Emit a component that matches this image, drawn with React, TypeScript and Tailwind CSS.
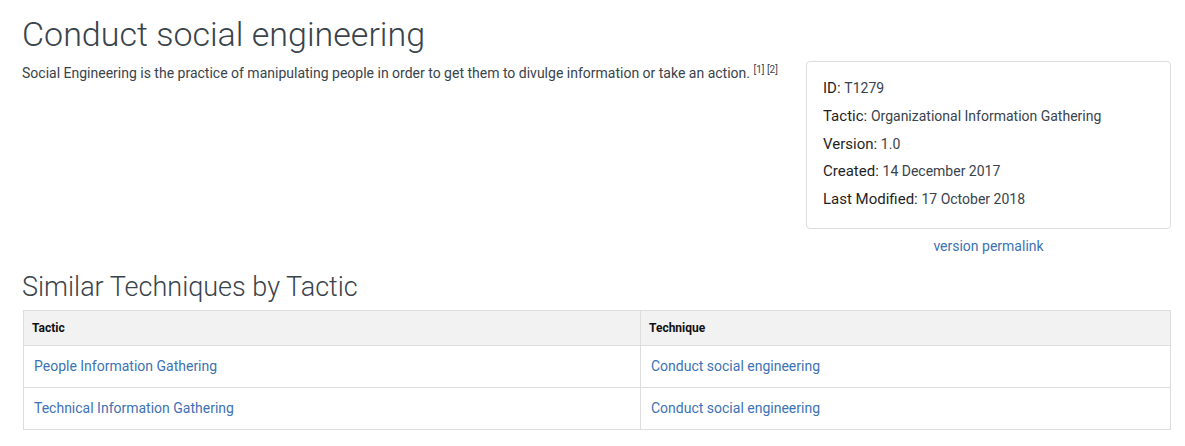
const rows = [
  { tactic: "People Information Gathering", technique: "Conduct social engineering" },
  { tactic: "Technical Information Gathering", technique: "Conduct social engineering" },
];

const meta = [
  { label: "ID", value: "T1279" },
  { label: "Tactic", value: "Organizational Information Gathering" },
  { label: "Version", value: "1.0" },
  { label: "Created", value: "14 December 2017" },
  { label: "Last Modified", value: "17 October 2018" },
];

export default function App() {
  return (
    <div className="min-h-[446px] bg-white pl-[22px] pr-[14px] pt-[12px] font-['Roboto',sans-serif] text-[#39434c]">
      <h1 className="text-[34px] font-light leading-[44px] text-[#39434c]">Conduct social engineering</h1>

      <div className="flex items-start justify-between">
        {/* Description */}
        <p className="mt-[7px] text-[14px] leading-[20px] text-[#39434c]">
          Social Engineering is the practice of manipulating people in order to get them to divulge information or take an action.{" "}
          <sup className="text-[10px]">
            <a className="text-[#39434c]">[1]</a> <a className="text-[#39434c]">[2]</a>
          </sup>
        </p>

        {/* Info card */}
        <div className="mt-[5px] w-[365px] shrink-0">
          <div className="rounded-[4px] border border-[#dddddd] px-[16px] pt-[13px] pb-[14px]">
            {meta.map((m) => (
              <div key={m.label} className="h-[27.75px] text-[14px] leading-[27.75px] text-[#39434c]">
                <span className="text-[15px] leading-[20px] text-[#1f1f1f]">{m.label}: </span>
                {m.value}
              </div>
            ))}
          </div>
          <div className="mt-[7px] text-center text-[14px] leading-[20px]">
            <a className="text-[#3d72b4]">version permalink</a>
          </div>
        </div>
      </div>

      <h2 className="mt-[13px] text-[27px] font-light leading-[36px] text-[#39434c]">Similar Techniques by Tactic</h2>

      {/* Table */}
      <table className="mt-[5px] ml-[1px] w-[1148px] border-collapse text-[14px]">
        <thead>
          <tr className="bg-[#f2f2f2]">
            <th className="h-[35px] w-[617px] border border-[#dddddd] px-[8px] text-left text-[12px] font-bold text-[#111]">Tactic</th>
            <th className="h-[35px] border border-[#dddddd] px-[8px] text-left text-[12px] font-bold text-[#111]">Technique</th>
          </tr>
        </thead>
        <tbody>
          {rows.map((r) => (
            <tr key={r.tactic}>
              <td className="h-[42px] border border-[#dddddd] px-[10px]">
                <a className="text-[#3d72b4]">{r.tactic}</a>
              </td>
              <td className="h-[42px] border border-[#dddddd] px-[10px]">
                <a className="text-[#3d72b4]">{r.technique}</a>
              </td>
            </tr>
          ))}
        </tbody>
      </table>
    </div>
  );
}
